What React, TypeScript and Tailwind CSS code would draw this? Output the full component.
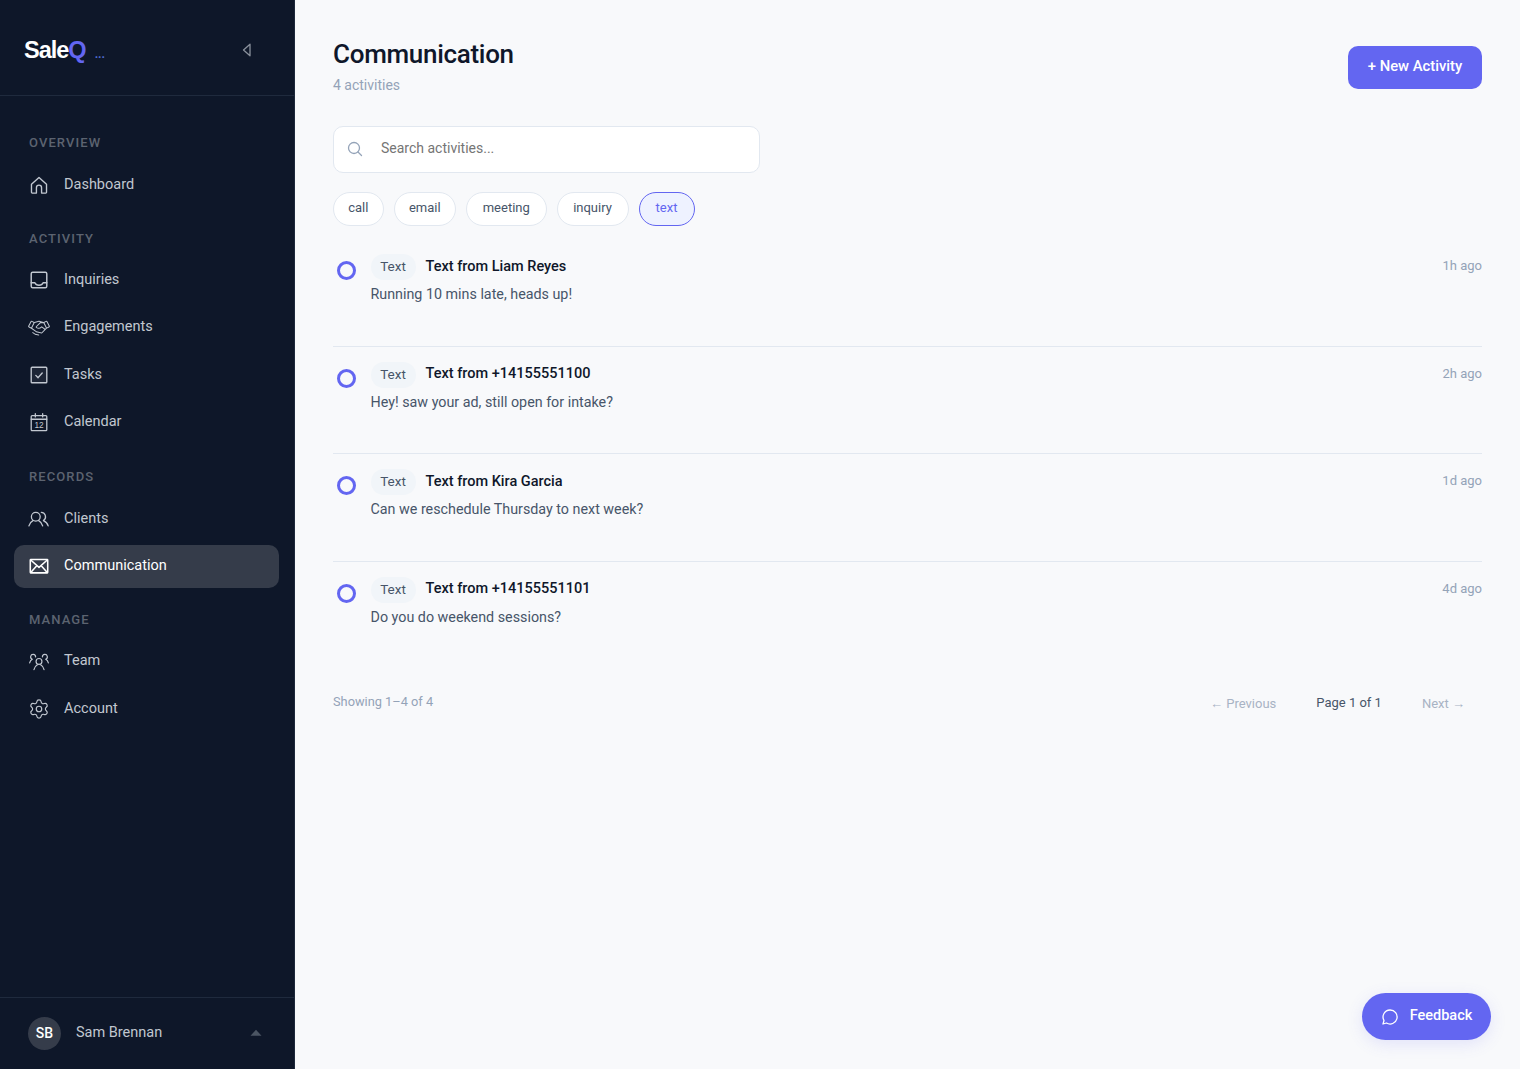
import React from "react";
import { Settings } from "lucide-react";
import { PiHandshakeLight } from "react-icons/pi";

const I = ({ children, w = 1.3 }: { children: React.ReactNode; w?: number }) => (
  <svg viewBox="0 0 24 24" width="22" height="22" fill="none" stroke="currentColor" strokeWidth={w} strokeLinecap="round" strokeLinejoin="round" className="shrink-0">
    {children}
  </svg>
);

const Home = () => <I w={1.5}><path d="M3.800 11.300 12 3.800l8.200 7.500V20a.8.8 0 0 1-.8.8h-4.600V15a2.800 2.800 0 0 0-5.600 0v5.800H4.600a.8.8 0 0 1-.8-.8z" /></I>;
const Inbox = () => <I w={1.6}><rect x="3.500" y="3.500" width="17" height="17" rx="1.600" /><path d="M3.500 15h4c.8 2 2.300 2.800 4.500 2.800s3.700-.8 4.500-2.800h4" /></I>;
const Shake = () => <span className="w-[22px] h-[22px] shrink-0 flex items-center justify-center"><PiHandshakeLight size={25} /></span>;
const Task = () => <I w={1.5}><rect x="3.500" y="3.500" width="17" height="17" rx="1" fill="#ffffff10" /><path d="m8.500 12.400 2.500 2.500 4.500-5" /></I>;
const Cal = () => (
  <I w={1.4}>
    <rect x="3.500" y="5" width="17" height="16.500" rx="1" />
    <path d="M3.500 9h17M8 2.800v3.700M16 2.800v3.700" />
    <text x="12" y="19" textAnchor="middle" fontSize="9" fontFamily="Liberation Sans, sans-serif" stroke="none" fill="currentColor">12</text>
  </I>
);
const Clients = () => <I w={1.4}><circle cx="8.500" cy="9.500" r="4.800" /><path d="M1 19.500c.6-2.800 2.500-4.800 4.400-5.800M16 19.500c-.6-2.800-2.500-4.800-4.400-5.800" /><path d="M14.500 4.800a4.800 4.800 0 0 1 2.300 8.900c2.300 1 4.400 3 5.200 5.800" /></I>;
const Mail = () => <I w={1.7}><rect x="2.500" y="5" width="19" height="14.500" rx="0.600" /><path d="m3 5.500 9 8 9-8M3 19l6.800-7.500M21 19l-6.800-7.500" /></I>;
const Team = () => <I w={1.3}><circle cx="12" cy="12.500" r="3.200" /><path d="M6.500 21.500c.5-2.800 2.300-4.700 3.800-5.400M17.500 21.500c-.5-2.800-2.300-4.700-3.800-5.400" /><path d="M8.300 7.500a2.700 2.700 0 1 0-3.600 2.600C3.200 10.800 2.200 12.300 1.800 14M15.700 7.500a2.700 2.700 0 1 1 3.600 2.600c1.500.7 2.500 2.200 2.900 3.900" /></I>;
const Gear = () => <span className="w-[22px] h-[22px] shrink-0 flex items-center justify-center"><Settings size={22} strokeWidth={1.300} /></span>;

const NavItem = ({ icon, label, active }: { icon: React.ReactNode; label: string; active?: boolean }) => (
  <div className={`flex items-center h-[43px] pl-[14px] gap-[14px] rounded-[10px] text-[14.500px] ${active ? "bg-[#353c4a] text-white" : "text-[#c1c7d0]"}`}>
    {icon}
    <span>{label}</span>
  </div>
);

const Label = ({ children, mb = "mb-[10px]" }: { children: React.ReactNode; mb?: string }) => (
  <div className={`h-[20px] leading-[20px] pl-[15px] text-[13px] font-medium tracking-[1.100px] text-[#5c6370] ${mb}`}>{children}</div>
);

const rows = [
  { t: "Text from Liam Reyes", b: "Running 10 mins late, heads up!", a: "1h ago" },
  { t: "Text from +14155551100", b: "Hey! saw your ad, still open for intake?", a: "2h ago" },
  { t: "Text from Kira Garcia", b: "Can we reschedule Thursday to next week?", a: "1d ago" },
  { t: "Text from +14155551101", b: "Do you do weekend sessions?", a: "4d ago" },
];

const chipClass = "h-[34px] rounded-full bg-white border border-[#e2e8f0] text-[13px] text-[#475569] flex items-center justify-center";

export default function App() {
  return (
    <div className="flex h-screen w-full overflow-hidden bg-[#f8f9fb] font-['Roboto',sans-serif]">
      <aside className="w-[295px] shrink-0 bg-[#0e1729] border-r border-[#1e293b] flex flex-col">
        <div className="h-[96px] shrink-0 border-b border-[#1f2a3d] flex items-center justify-between pl-[24px] pr-[42px]">
          <div className="flex items-baseline relative top-[3px]">
            <span className="font-['Liberation_Sans',sans-serif] font-bold text-[23.500px] tracking-[-1px] text-white">Sale<span className="text-[#6366f1]">Q</span></span>
            <span className="ml-[9px] text-[#4f6bd0] text-[12px] font-bold leading-none">...</span>
          </div>
          <svg className="relative top-[2px]" width="10" height="14" viewBox="0 0 10 14" fill="none" stroke="#8a919c" strokeWidth="1.300"><path d="M8 1.200v11.600L1.500 7z" strokeLinejoin="round" /></svg>
        </div>
        <nav className="flex-1 pt-[37px] pl-[14px] pr-[15px]">
          <div className="mb-[23px]">
            <Label>OVERVIEW</Label>
            <NavItem icon={<Home />} label="Dashboard" />
          </div>
          <div className="mb-[23px] flex flex-col">
            <Label mb="mb-[9px]">ACTIVITY</Label>
            <div className="flex flex-col gap-[4.500px]">
              <NavItem icon={<Inbox />} label="Inquiries" />
              <NavItem icon={<Shake />} label="Engagements" />
              <NavItem icon={<Task />} label="Tasks" />
              <NavItem icon={<Cal />} label="Calendar" />
            </div>
          </div>
          <div className="mb-[22px]">
            <Label mb="mb-[11px]">RECORDS</Label>
            <div className="flex flex-col gap-[4px]">
              <NavItem icon={<Clients />} label="Clients" />
              <NavItem icon={<Mail />} label="Communication" active />
            </div>
          </div>
          <div>
            <Label mb="mb-[10px]">MANAGE</Label>
            <div className="flex flex-col gap-[4.500px]">
              <NavItem icon={<Team />} label="Team" />
              <NavItem icon={<Gear />} label="Account" />
            </div>
          </div>
        </nav>
        <div className="h-[72px] shrink-0 border-t border-[#1f2a3d] flex items-center pl-[28px] pr-[32px]">
          <div className="w-[33px] h-[33px] rounded-full bg-[#353c4a] text-white text-[14px] font-medium flex items-center justify-center">SB</div>
          <span className="ml-[15px] text-[14.500px] text-[#c1c7d0] flex-1 relative top-[-1px]">Sam Brennan</span>
          <svg className="relative top-[-1px]" width="12" height="8" viewBox="0 0 12 8" fill="#4b5563"><path d="M6 .8 11.500 6.800H.5z" /></svg>
        </div>
      </aside>

      <main className="flex-1 min-w-0 px-[38px] pt-[36px] relative">
        <div className="flex items-start justify-between h-[90px]">
          <div>
            <h1 className="text-[26px] leading-[36px] font-medium text-[#0f172a] tracking-[-0.3px]">Communication</h1>
            <p className="mt-[3px] text-[14px] leading-[20px] text-[#94a3b8]">4 activities</p>
          </div>
          <button className="mt-[10px] w-[134px] h-[43px] rounded-[10px] bg-[#6366f1] text-white text-[14.800px] font-medium pb-[2px]">+ New Activity</button>
        </div>
        <div className="w-[427px] h-[47px] bg-white border border-[#e2e8f0] rounded-[10px] flex items-center pl-[13px]">
          <svg className="relative top-[-1px]" width="16" height="16" viewBox="0 0 16 16" fill="none" stroke="#94a3b8" strokeWidth="1.300"><circle cx="7" cy="7" r="5.500" /><path d="m11 11 3.500 3.500" strokeLinecap="round" /></svg>
          <span className="ml-[18px] text-[14px] text-[#757575] relative top-[-1px]">Search activities...</span>
        </div>
        <div className="flex gap-[10px] mt-[19px]">
          <span className={`${chipClass} w-[50.500px]`}><span className="relative top-[-1px]">call</span></span>
          <span className={`${chipClass} w-[62.500px]`}><span className="relative top-[-1px]">email</span></span>
          <span className={`${chipClass} w-[80.500px]`}><span className="relative top-[-1px]">meeting</span></span>
          <span className={`${chipClass} w-[72px]`}><span className="relative top-[-1px]">inquiry</span></span>
          <span className="h-[34px] w-[56px] rounded-full bg-[#eef2ff] border border-[#6366f1] text-[13px] text-[#6366f1] flex items-center justify-center"><span className="relative top-[-1px]">text</span></span>
        </div>
        <div className="mt-[13px]">
          {rows.map((r, i) => (
            <div key={i} className={`flex items-start pt-[15px] h-[107.500px] ${i < 3 ? "border-b border-[#e2e8f0]" : ""}`}>
              <div className="ml-[4px] mt-[7px] w-[19px] h-[19px] rounded-full border-[3px] border-[#6366f1] shrink-0" />
              <div className="ml-[14.500px] flex-1">
                <div className="flex items-center">
                  <span className="h-[26px] w-[45px] rounded-full bg-[#f1f5f9] text-[13.500px] text-[#475569] flex items-center justify-center pb-[1px]">Text</span>
                  <span className="ml-[10px] text-[14.500px] font-medium text-[#0f172a] relative top-[-0.500px]">{r.t}</span>
                </div>
                <p className="mt-[3px] text-[14.300px] leading-[22px] text-[#475569]">{r.b}</p>
              </div>
              <span className="mt-[2px] text-[13px] text-[#94a3b8]">{r.a}</span>
            </div>
          ))}
        </div>
        <div className="flex items-center justify-between mt-[22px] pr-[17px] h-[24px]">
          <span className="text-[12.800px] text-[#94a3b8] relative top-[-1px]">Showing 1–4 of 4</span>
          <div className="flex items-center text-[13px]">
            <span className="text-[#a8b3c4] relative top-[1px]">← Previous</span>
            <span className="ml-[40px] text-[#475569]">Page 1 of 1</span>
            <span className="ml-[40px] text-[#a8b3c4] relative top-[1px]">Next →</span>
          </div>
        </div>
        <button className="absolute right-[29px] bottom-[29px] w-[129px] h-[47px] rounded-full bg-[#6366f1] text-white text-[14.500px] font-medium flex items-center justify-center gap-[11px] shadow-[0_4px_16px_rgba(99,102,241,0.15)]">
          <svg width="18" height="18" viewBox="0 0 18 18" fill="none" stroke="white" strokeWidth="1.300"><path d="M9 2a7 7 0 1 1-3.500 13L2 16l1-3.500A7 7 0 0 1 9 2z" strokeLinejoin="round" /></svg>
          <span className="relative top-[-1px]">Feedback</span>
        </button>
      </main>
    </div>
  );
}
